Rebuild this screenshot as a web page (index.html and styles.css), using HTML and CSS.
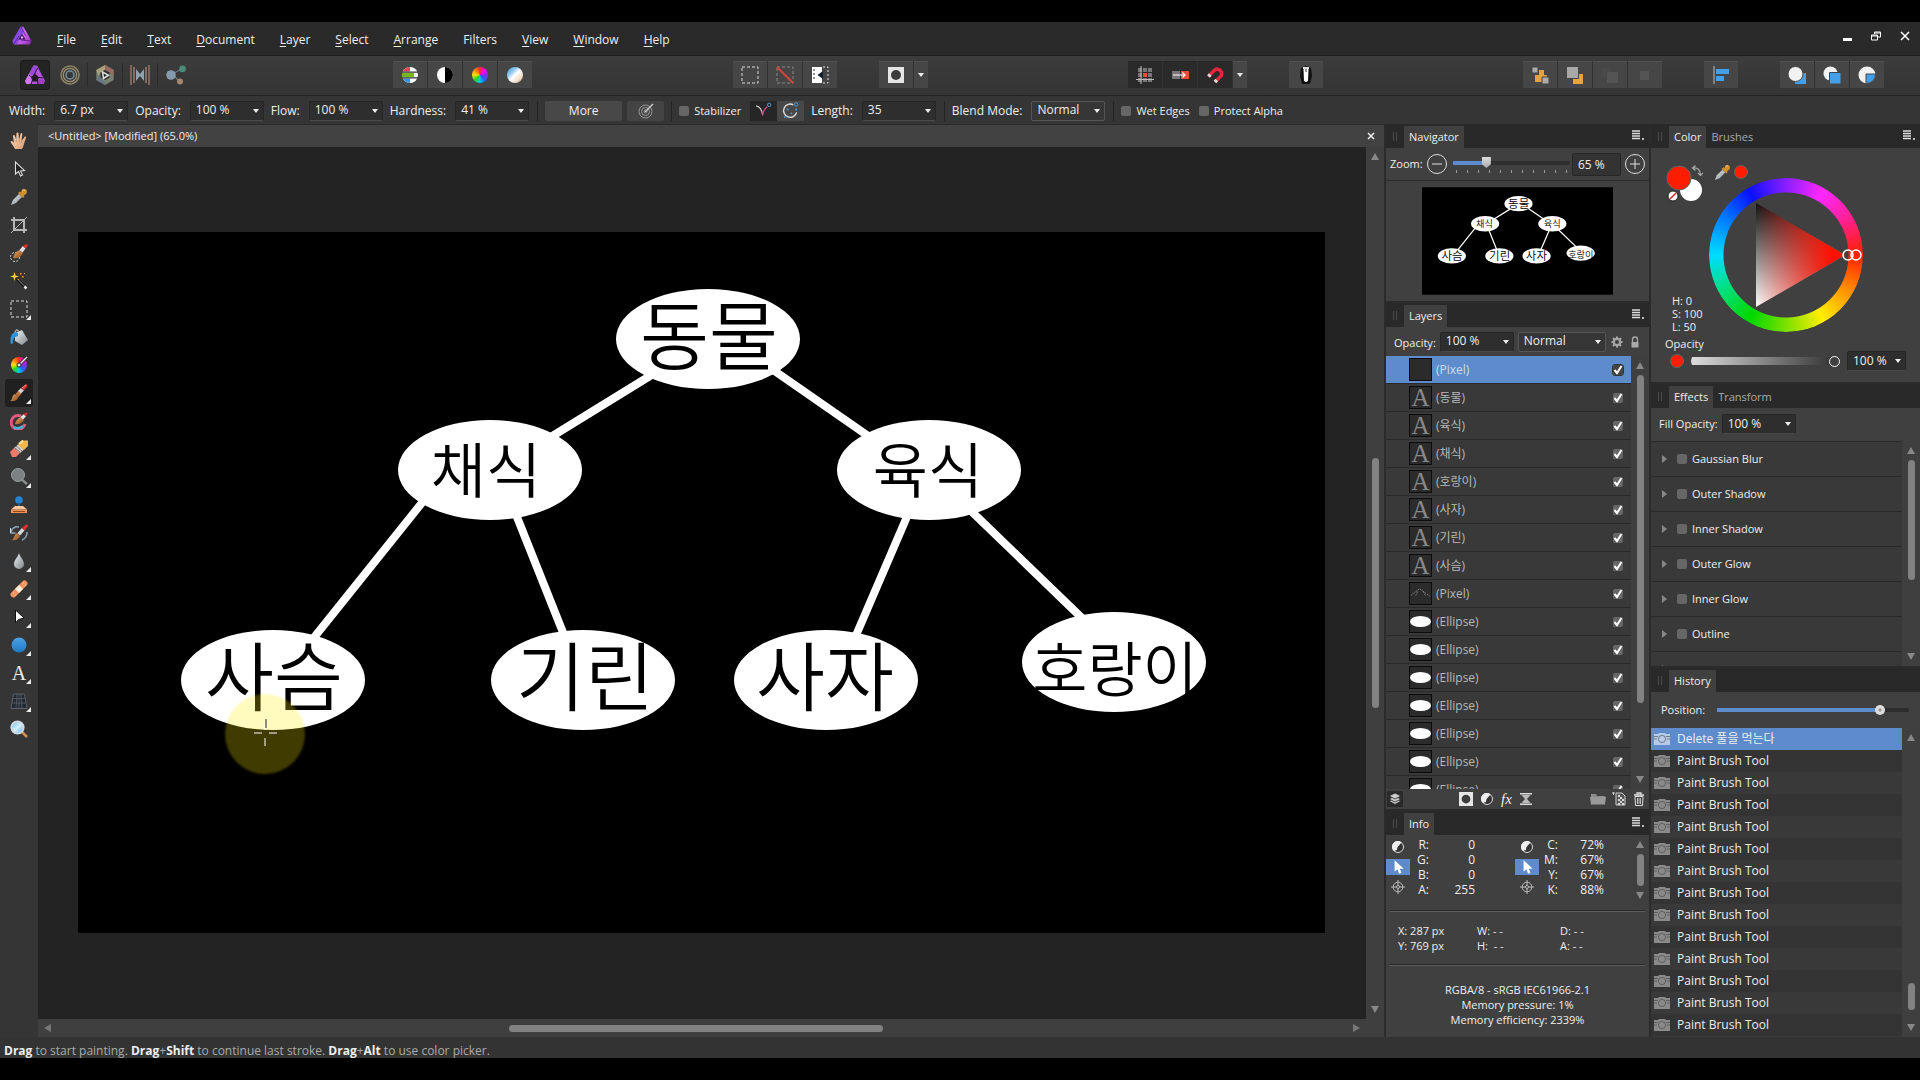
FILE: index.html
```html
<!DOCTYPE html>
<html lang="en">
<head>
  <meta charset="UTF-8">
  <meta name="viewport" content="width=device-width, initial-scale=1">
  <title>Photo Editor</title>
  <link rel="stylesheet" href="styles.css">
</head>
<body>

  <!-- Icon sprite -->
  <svg class="sprite" aria-hidden="true">
    <defs>
      <linearGradient id="g-purple" x1="0" y1="0" x2="1" y2="1"><stop offset="0" stop-color="#7a3ff0"/><stop offset=".5" stop-color="#d56cf5"/><stop offset="1" stop-color="#8a2bb8"/></linearGradient>
      <linearGradient id="g-wood" x1="0" y1="0" x2="1" y2="1"><stop offset="0" stop-color="#e8a868"/><stop offset="1" stop-color="#8a4a1c"/></linearGradient>
      <linearGradient id="g-steel" x1="0" y1="0" x2="1" y2="1"><stop offset="0" stop-color="#eef2f4"/><stop offset="1" stop-color="#7d868c"/></linearGradient>
      <linearGradient id="g-blue" x1="0" y1="0" x2="0" y2="1"><stop offset="0" stop-color="#4aa3e8"/><stop offset="1" stop-color="#1f78c4"/></linearGradient>
      <linearGradient id="g-photo" x1="0" y1="0" x2="1" y2="1"><stop offset="0" stop-color="#3a9be0"/><stop offset=".3" stop-color="#8cc6ee"/><stop offset=".5" stop-color="#fff"/><stop offset=".75" stop-color="#f3ddca"/><stop offset="1" stop-color="#d9935c"/></linearGradient>
      <linearGradient id="g-lens" x1="0" y1="0" x2="1" y2="1"><stop offset="0" stop-color="#5db4ee"/><stop offset=".5" stop-color="#d6effc"/><stop offset="1" stop-color="#58a9e2"/></linearGradient>
      <linearGradient id="g-skin" x1="0" y1="0" x2="1" y2="1"><stop offset="0" stop-color="#ffe0c4"/><stop offset="1" stop-color="#d99866"/></linearGradient>
    </defs>

    <symbol id="logo" viewBox="0 0 20 20">
      <path d="M8.500 .8h3L19.500 15l-1.800 3.500H2L.5 15z" fill="url(#g-purple)"/>
      <path d="M8.500 .8l3.200 6L5 18.500H2L.5 15z" fill="#6b3bd8" opacity=".65"/>
      <path d="M10 8l3.500 5.500h-7z" fill="#2a0f3e"/>
      <path d="M9 1l5 9M19 15l-10-1M2 18l5-8" stroke="#4a1a78" stroke-width=".8"/>
      <circle cx="10" cy="11.500" r="1.200" fill="#e9a8ff"/>
    </symbol>
    <symbol id="persona" viewBox="0 0 20 20">
      <path d="M8.500 .5h3.500L20 16l-1.500 3H1.500L0 16z" fill="#b452dc"/>
      <path d="M8.500 .5L4.500 8l4 3 3.500-9z" fill="#9a4ad8"/><path d="M4 9L0 16l1.500 3h4l2-7z" fill="#cf78ee"/><path d="M19.500 15l-8-1 1 5h6z" fill="#a03cc8"/>
      <path d="M10 8.500l4 4-2 4H8l-2-4z" fill="#1d1d1d"/>
      <path d="M12.500 3L8.500 11M18 13l-8-1M4 10l5 4M6 19l2.500-6M13 19l-1-5" stroke="#2c1238" stroke-width="1"/>
    </symbol>
    <symbol id="liquify" viewBox="0 0 20 20">
      <g fill="none"><circle cx="10" cy="10" r="9" stroke="#8c8566" stroke-width="1.500"/><circle cx="10" cy="10" r="6.700" stroke="#a09572" stroke-width="1.200"/><circle cx="10" cy="10" r="4" stroke="#7390a0" stroke-width="1.500"/></g>
    </symbol>
    <symbol id="develop" viewBox="0 0 20 20">
      <path d="M10 0l8.700 5v10L10 20l-8.700-5V5z" fill="#77816f"/>
      <path d="M10 0l8.700 5v5L10 5z" fill="#9a6a60"/><path d="M1.300 5L10 0v5L5 8v7z" fill="#a8a078"/><path d="M1.300 15L5 8v5l5 4v3z" fill="#66788a"/>
      <path d="M10 5l4.500 2.500v5L10 15l-4.500-2.500v-5z" fill="#2c2c2c"/>
      <path d="M7.500 7l6 3.200-5 3.300z" fill="none" stroke="#e0e0e0" stroke-width="1.500"/>
    </symbol>
    <symbol id="tone" viewBox="0 0 20 20">
      <path d="M1 0v20M19 0v20" stroke="#927466" stroke-width="1.500"/><path d="M4 2v16M16 2v16" stroke="#b09080" stroke-width="1.200"/>
      <path d="M6 4l4 5 4-5v12l-4-5-4 5z" fill="#8fa0b0"/>
    </symbol>
    <symbol id="export" viewBox="0 0 20 20">
      <path d="M6 9l10-5M6 9l8 8" stroke="#6c7a80" stroke-width="1.200"/>
      <circle cx="5" cy="10" r="4.800" fill="#8799ac"/><circle cx="16.500" cy="3.800" r="3.400" fill="#4c8a7a"/><circle cx="14" cy="16.500" r="3" fill="#a38770"/>
    </symbol>
    <symbol id="levels" viewBox="0 0 16 16">
      <circle cx="8" cy="8" r="8" fill="#fff"/><path d="M8 0a8 8 0 0 0-7 4.500h7z" fill="#e8425a"/><path d="M0 6h12v4H0z" fill="#74b81e"/><path d="M1 11.500A8 8 0 0 0 8 16v-4.500z" fill="#3e95e2"/><path d="M0 5.200h16M0 10.800h16" stroke="#333" stroke-width="1.200"/>
    </symbol>
    <symbol id="contrast" viewBox="0 0 16 16"><circle cx="8" cy="8" r="8" fill="#fff"/><path d="M8 0a8 8 0 0 1 0 16z" fill="#000"/></symbol>
    <symbol id="photo" viewBox="0 0 16 16"><circle cx="8" cy="8" r="8" fill="url(#g-photo)"/></symbol>
    <symbol id="marquee" viewBox="0 0 18 18"><path d="M1 1h16v16H1z" fill="none" stroke="#ddd" stroke-dasharray="3 2"/></symbol>
    <symbol id="deselect" viewBox="0 0 18 18"><path d="M1 1h16v16H1z" fill="none" stroke="#888" stroke-dasharray="3 2"/><path d="M1 1l16 16" stroke="#d8413a" stroke-width="2"/></symbol>
    <symbol id="invert" viewBox="0 0 18 18"><path d="M1 1h10v16H1z" fill="#fff"/><path d="M3 3v12" stroke="#222" stroke-dasharray="2 2"/><path d="M12 5v8L6.500 9z" fill="#14202e"/><path d="M12 1h5v16h-5" fill="none" stroke="#ddd" stroke-dasharray="2 2"/></symbol>
    <symbol id="mask" viewBox="0 0 16 16"><path d="M0 0h16v16H0z" fill="#e6e6e6"/><circle cx="8" cy="8" r="5" fill="#3c3c3c"/></symbol>
    <symbol id="grid" viewBox="0 0 18 18"><path d="M2 2h4v4H2zM7 2h4v4H7zM12 2h4v4h-4zM2 7h4v4H2zM12 7h4v4h-4zM2 12h4v4H2zM7 12h4v4H7zM12 12h4v4h-4z" fill="#777"/><path d="M7 7h4v4H7z" fill="#ee4b3b"/><path d="M5 0v18M0 13.500h18" stroke="#bbb"/></symbol>
    <symbol id="snapmove" viewBox="0 0 18 18"><path d="M1 5h8v8H1z" fill="#777"/><path d="M10 5h8v8h-8z" fill="#ee4b3b"/><path d="M2 9h12M11.500 6.500L14 9l-2.500 2.500" fill="none" stroke="#fff" stroke-width="1.200"/></symbol>
    <symbol id="magnet" viewBox="0 0 18 18"><g fill="none" stroke-width="3.500"><path d="M2.500 10.500L8 4.500a4.500 4.500 0 0 1 7 5.500L9 16" stroke="#e8233c"/><path d="M2.500 10.500l1.800-2M9 16l1.800-2" stroke="#ddd"/></g></symbol>
    <symbol id="assistant" viewBox="0 0 18 18"><path d="M4 2l5-2 5 2 1 8-2 8H5l-2-8z" fill="#111"/><path d="M6.500 3h5l-.5 12-2 1-2-1z" fill="#fff"/><path d="M6 1h6v2H6z" fill="#ddd"/><path d="M9 3v3" stroke="#333"/></symbol>
    <symbol id="back" viewBox="0 0 18 18"><path d="M8 4h5v5h3v4h-4v3H4V9h4z" fill="#e5a243"/><path d="M1 1h6v6H1zM11 11h7v7h-7z" fill="#aaa" stroke="#444"/></symbol>
    <symbol id="backone" viewBox="0 0 18 18"><path d="M7 8h10v10H7z" fill="#e5a243"/><path d="M.5 .5h12v12H.5z" fill="#a8a8a8" stroke="#444"/></symbol>
    <symbol id="fwdone" viewBox="0 0 18 18"><path d="M1 2h9v9H1z" fill="#494949"/><path d="M6 6h11v11H6z" fill="#545454"/></symbol>
    <symbol id="front" viewBox="0 0 18 18"><path d="M4 5h9v9H4z" fill="#545454"/></symbol>
    <symbol id="align" viewBox="0 0 18 18"><path d="M2 0v18" stroke="#bbb"/><path d="M4 3h13v5H4zM4 10h8v5H4z" fill="#459fe6"/></symbol>
    <symbol id="bool1" viewBox="0 0 18 18"><path d="M7 7h11v11H7z" fill="#459fe6"/><circle cx="7.500" cy="8" r="7.500" fill="#f2f2f2" stroke="#444"/></symbol>
    <symbol id="bool2" viewBox="0 0 18 18"><circle cx="7.500" cy="7.500" r="7" fill="#f2f2f2"/><path d="M6.500 6.500H18V18H6.500z" fill="#459fe6" stroke="#444"/></symbol>
    <symbol id="bool3" viewBox="0 0 18 18"><circle cx="9" cy="9" r="8.500" fill="#f2f2f2"/><path d="M8 8h9.500a9 9 0 0 1-9 9.500H8z" fill="#459fe6" stroke="#444"/></symbol>
    <symbol id="target" viewBox="0 0 16 16"><g fill="none" stroke="#999"><circle cx="7.500" cy="8.500" r="6.500"/><circle cx="7.500" cy="8.500" r="4"/><circle cx="7.500" cy="8.500" r="1.500"/></g><path d="M7 9l8-8" stroke="#ccc" stroke-width="1.500"/></symbol>
    <symbol id="rope" viewBox="0 0 18 18"><path d="M1 4q6 1 7 10" fill="none" stroke="#ddd" stroke-width="1.200"/><path d="M8 14q1-6 5-9" fill="none" stroke="#d04a8a" stroke-width="1.500"/><circle cx="15" cy="3" r="1.800" fill="none" stroke="#4aa3e8"/></symbol>
    <symbol id="window" viewBox="0 0 18 18"><path d="M12 3a7 7 0 1 0 3.500 8" fill="none" stroke="#ddd" stroke-width="1.500"/><circle cx="15" cy="2.500" r="1.800" fill="none" stroke="#4aa3e8"/><g fill="#4aa3e8"><circle cx="6" cy="8" r="1"/><circle cx="10" cy="12" r="1"/><circle cx="3" cy="16" r="1"/><circle cx="15" cy="8" r="1"/></g></symbol>

    <symbol id="hand" viewBox="0 0 18 18"><path d="M5 17C4 14 1 12 .5 9.500c1-1 2.500 0 3.500 1.500L3 4c0-1.500 1.500-1.500 2 0l1.200 4L6.500 1.500c.2-1.500 1.800-1.500 2 0L9 8l1.500-6c.5-1.500 2-1 1.800.5L11.500 9l3-4c1-1 2-.2 1.500 1C14.500 9 14 14 12 17z" fill="url(#g-skin)"/><path d="M6.200 8v2M9 8v2M11.500 9l-.5 2" stroke="#b9773f" stroke-width=".6"/></symbol>
    <symbol id="move" viewBox="0 0 18 18"><path d="M5.500 2v12l3-2.500 2 4.500 2-1-2-4 4-.5z" fill="#222" stroke="#ddd" stroke-width="1.100"/></symbol>
    <symbol id="picker" viewBox="0 0 18 18"><path d="M1 17l2-5 6-6 3 3-6 6z" fill="url(#g-steel)"/><path d="M8 5l5 5 1.500-1.500-1-1C17 6 17.500 4 16.500 2 15 .5 12 .5 11 4.500l-1-1z" fill="#d0902e"/><path d="M12 2.500q2-1.500 3 0" stroke="#f5d090" fill="none"/></symbol>
    <symbol id="crop" viewBox="0 0 18 18"><path d="M4 1v13h13M1 4h13v13" fill="none" stroke="#b5b5b5" stroke-width="2"/><path d="M1 17L17 1" stroke="#b5b5b5"/></symbol>
    <symbol id="brush" viewBox="0 0 18 18"><path d="M0 17c3-1 1-5 5-7l3.500 3C7 17 3 17.500 0 17z" fill="url(#g-wood)"/><path d="M5.500 10l3-3.500 3 3-3 3.500z" fill="#c0763a"/><path d="M8 7l3-3 3 2.500-3 3z" fill="#ccd2d6"/><path d="M11 4L15.500 .3Q18.500 0 17 3l-3.200 3.600z" fill="#d92f2f"/><path d="M12 4l4-3" stroke="#ff8c80"/></symbol>
    <symbol id="selbrush" viewBox="0 0 18 18"><circle cx="5" cy="13" r="4.500" fill="none" stroke="#ddd" stroke-dasharray="2 1.500"/><path d="M3 14c1-5 4-7 7-8l3 3c-2 4-5 6-10 5z" fill="url(#g-wood)"/><path d="M9.500 6L13 2l2.500 2.500-3 4z" fill="#dfe3e6"/><path d="M13 2q2-2.500 5-1.500-.5 3-2.500 4z" fill="#d92f2f"/></symbol>
    <symbol id="wand" viewBox="0 0 18 18"><path d="M6 6l10 10" stroke="#1c1c1c" stroke-width="3"/><path d="M7 6.500l9 9" stroke="#888"/><path d="M14.500 14.500l2 2" stroke="#eee" stroke-width="2.500"/><path d="M4.500 0l1 3.500L9 4.500l-3.500 1-1 3.500-1-3.500L0 4.500l3.500-1z" fill="#ffd24a"/><path d="M10 1h1.500v1.500H10zM12 4h1.500v1.500H12zM8 7h1v1H8zM14 1h1v1h-1z" fill="#f0a838"/></symbol>
    <symbol id="bucket" viewBox="0 0 18 18"><path d="M5 5l7-3 6 10-6 5-7-4z" fill="url(#g-steel)"/><path d="M4.500 6Q6-1 9 4" fill="none" stroke="#bbb" stroke-width="1.200"/><path d="M8 5C2 3 0 8 .5 15q1.500 2 2.500 0C3 10 5 9 8 8z" fill="#2e93d8"/></symbol>
    <symbol id="crookbrush" viewBox="0 0 18 18"><path d="M11 4a7 7 0 1 0 4 8" fill="none" stroke="#e05a80" stroke-width="3"/><path d="M4 15q4 3 9-1" stroke="#45b4dc" stroke-width="2.500" fill="none"/><path d="M5 12c1-4 3-6 6-7l3 3c-2 3-5 5-9 4z" fill="url(#g-wood)"/><path d="M10.500 5L14 2l2 2.500-3 3z" fill="#dfe3e6"/><path d="M13.500 2q2-2 4-1.500-.2 3-2 4z" fill="#d92f2f"/></symbol>
    <symbol id="eraser" viewBox="0 0 18 18"><path d="M0 12l4-4 6 5-4 4H2z" fill="#ef7a6c"/><path d="M4 8l4-3.500 6 5L10 13z" fill="#d9d4cc"/><path d="M6 6l6 5M5 8l5 4" stroke="#777"/><path d="M8 4.500L12 .5h6V6l-4 4z" fill="#f7b64a"/><path d="M9 4l4-3.500" stroke="#ffe2a0" stroke-width="2"/></symbol>
    <symbol id="dodge" viewBox="0 0 18 18"><path d="M11 11l6 5" stroke="#8a8a8a" stroke-width="2.500"/><circle cx="8" cy="7" r="6.500" fill="#7c8184" stroke="#9a9fa2"/></symbol>
    <symbol id="stamp" viewBox="0 0 18 18"><circle cx="9" cy="4" r="3.800" fill="#2583cf"/><path d="M8 7h2v4H8z" fill="#1b5d98"/><path d="M5 10h8l4 3.500H1z" fill="#ffc79a"/><path d="M1 13.500h16V17H1z" fill="#ee9257"/><path d="M3 15.500h12" stroke="#8f4b1e"/></symbol>
    <symbol id="undobrush" viewBox="0 0 18 18"><path d="M1 8Q3 2 9 3M17 8q0 6-5 8" fill="none" stroke="#8aa7bd" stroke-width="1.500"/><path d="M.5 4v5h5" fill="none" stroke="#cfe0ec"/><path d="M2 16c2-1 2-5 5-7l3 3c-1 3-4 5-8 4z" fill="url(#g-wood)"/><path d="M7.500 9L12 4l2.500 2.500-4.500 5z" fill="#d5dade"/><path d="M12 4L16 .5q3-.5 1.500 2.500l-3 3.500z" fill="#e03030"/></symbol>
    <symbol id="drop" viewBox="0 0 18 18"><path d="M9 1c1 4 5 7 5 11a5 5 0 0 1-10 0C4 8 8 5 9 1z" fill="url(#g-steel)"/></symbol>
    <symbol id="patch" viewBox="0 0 18 18"><path d="M3.500 14.500l11-11" stroke="#f4955e" stroke-width="6" stroke-linecap="round"/><path d="M7 11l4-4" stroke="#fff0e0" stroke-width="5.500"/><path d="M3 13h1M5 15h1M13 3h1M15 5h1" stroke="#ffd0a8"/></symbol>
    <symbol id="node" viewBox="0 0 18 18"><path d="M5.500 2v13l3-3.500L14 10z" fill="#fff" stroke="#111"/></symbol>
    <symbol id="shape" viewBox="0 0 18 18"><circle cx="9" cy="9" r="7.500" fill="url(#g-blue)"/></symbol>
    <symbol id="mesh" viewBox="0 0 18 18"><path d="M3.500 2h11L17 16.500H1z" fill="#222934" stroke="#5c6068"/><path d="M7 2L6 16.500M11 2l1 14.500M3 6.500h12M2 11h14M9 2v14.500" stroke="#5c6068" stroke-width=".8"/></symbol>
    <symbol id="zoomtool" viewBox="0 0 18 18"><path d="M12 12l5 5" stroke="#d98d48" stroke-width="2.500"/><circle cx="7.500" cy="7.500" r="6.200" fill="url(#g-lens)" stroke="#d5dade" stroke-width="1.800"/></symbol>

    <symbol id="menu" viewBox="0 0 12 10"><path d="M0 1h8M0 3.500h8M0 6h8M0 8.500h8" stroke="#ddd" stroke-width="1.500"/><path d="M10 8h2v2h-2z" fill="#bbb"/></symbol>
    <symbol id="gear" viewBox="0 0 12 12"><circle cx="6" cy="6" r="3.200" fill="none" stroke="#a5a5a5" stroke-width="2.200"/><path d="M6 .5v2M6 9.500v2M.5 6h2M9.500 6h2M2 2l1.500 1.500M8.500 8.500L10 10M10 2L8.500 3.500M3.500 8.500L2 10" stroke="#a5a5a5" stroke-width="2"/></symbol>
    <symbol id="lock" viewBox="0 0 12 12"><path d="M2.500 6h7v5.500h-7z" fill="#aaa"/><path d="M3.500 6V3.500a2.500 2.500 0 0 1 5 0V6" fill="none" stroke="#aaa" stroke-width="1.300"/></symbol>
    <symbol id="stack" viewBox="0 0 14 14"><g fill="#ccc" stroke="#222" stroke-width=".8"><path d="M7 6l6 3-6 3.500L1 9z"/><path d="M7 4l6 3-6 3-6-3z"/><path d="M7 1l6 3-6 3-6-3z"/></g></symbol>
    <symbol id="adjust" viewBox="0 0 14 14"><circle cx="7" cy="7" r="5.500" fill="#333" stroke="#ddd"/><path d="M3 11A5.500 5.500 0 0 1 10.500 2.500z" fill="#eee"/><path d="M3 11A5.500 5.500 0 0 1 7 1.500L6 10z" fill="#eee"/></symbol>
    <symbol id="hourglass" viewBox="0 0 14 14"><path d="M1 1h12v1.500H1zM1 11.500h12V13H1z" fill="#ddd"/><path d="M2.500 3h9L8 7l3.500 4h-9L6 7z" fill="#bbb"/></symbol>
    <symbol id="folder" viewBox="0 0 16 14"><path d="M1 2h5l1 2h8v8H1z" fill="#8d8d8d"/><path d="M0 5h16l-1 7.500H1z" fill="#999"/></symbol>
    <symbol id="newpixel" viewBox="0 0 14 14"><path d="M4 1h6l3 3v9H4z" fill="#555" stroke="#ccc"/><path d="M6 3h2v2H6zM8 5h2v2H8zM6 7h2v2H6zM10 7h2v2h-2zM8 9h2v2H8zM6 11h2v2H6zM10 11h2v2h-2z" fill="#ddd"/><path d="M0 1h3M1.500 0v3" stroke="#ccc"/></symbol>
    <symbol id="trash" viewBox="0 0 14 14"><path d="M2 3h10M5 2.500V1h4v1.500" fill="none" stroke="#ddd" stroke-width="1.300"/><path d="M3 4.500h8l-.5 9h-7z" fill="none" stroke="#ddd"/><path d="M5.500 6v6M7 6v6M8.500 6v6" stroke="#ddd" stroke-width=".8"/></symbol>
    <symbol id="pointer" viewBox="0 0 14 14"><path d="M4 1v10l2.500-2 1.500 4 2-1-1.500-3.500H12z" fill="#fff"/></symbol>
    <symbol id="cross" viewBox="0 0 14 14"><g fill="none" stroke="#bbb"><circle cx="7" cy="7" r="4.800"/><circle cx="7" cy="7" r="1.500"/><path d="M7 0v5.500M7 8.500V14M0 7h5.500M8.500 7H14"/></g></symbol>
    <symbol id="camera" viewBox="0 0 16 14"><path d="M0 2h4l1-1h6l1 1h4v11H0z" fill="currentColor" opacity=".85"/><path d="M0 4.500h4M0 7h3M12 4.500h4M13 7h3" stroke="#444" opacity=".6"/><circle cx="8" cy="7" r="3.600" fill="none" stroke="#444" opacity=".6"/></symbol>
    <symbol id="swap" viewBox="0 0 12 12"><path d="M2 3q7-1 7.500 7M4.500 .5L1.500 3l3 2.500M7 8l2.500 2.500L12 8" fill="none" stroke="#aaa" stroke-width="1.200"/></symbol>
    <symbol id="lines" viewBox="0 0 22 22"><path d="M1 13l9-7 11 8M8 9l-2 4M14 9l2 4" fill="none" stroke="#888" stroke-width=".9" stroke-dasharray="2 1"/></symbol>
  </svg>

  <header class="menubar">
    <svg class="app-logo"><use href="#logo"/></svg>
    <nav class="menus">
      <a href="#"><u>F</u>ile</a>
      <a href="#"><u>E</u>dit</a>
      <a href="#"><u>T</u>ext</a>
      <a href="#"><u>D</u>ocument</a>
      <a href="#"><u>L</u>ayer</a>
      <a href="#"><u>S</u>elect</a>
      <a href="#"><u>A</u>rrange</a>
      <a href="#">Filters</a>
      <a href="#"><u>V</u>iew</a>
      <a href="#"><u>W</u>indow</a>
      <a href="#"><u>H</u>elp</a>
    </nav>
    <div class="window-buttons">
      <button aria-label="Minimize"><svg viewBox="0 0 10 10"><path d="M1 7h9v3H1z" fill="#fff"/></svg></button>
      <button aria-label="Restore"><svg viewBox="0 0 10 10"><path d="M3.500 3V1h6v5H7M.5 4h6v5h-6zM.5 5h6M3.500 2h6" fill="none" stroke="#fff"/></svg></button>
      <button aria-label="Close"><svg viewBox="0 0 10 10"><path d="M1 1l8 8M9 1L1 9" stroke="#fff" stroke-width="1.500"/></svg></button>
    </div>
  </header>

  <div class="toolbar">
    <div class="personas">
      <button class="active" aria-label="Photo"><svg><use href="#persona"/></svg></button>
      <button aria-label="Liquify"><svg><use href="#liquify"/></svg></button>
      <button aria-label="Develop"><svg><use href="#develop"/></svg></button>
      <button aria-label="Tone Mapping"><svg><use href="#tone"/></svg></button>
      <button aria-label="Export"><svg><use href="#export"/></svg></button>
    </div>
    <span class="spacer"></span>
    <div class="group small">
      <button aria-label="Auto Levels"><svg><use href="#levels"/></svg></button>
      <button aria-label="Auto Contrast"><svg><use href="#contrast"/></svg></button>
      <button aria-label="Auto Colors"><span class="hue-dot"></span></button>
      <button aria-label="Auto White Balance"><svg><use href="#photo"/></svg></button>
    </div>
    <span class="spacer"></span>
    <div class="group">
      <button aria-label="Select All"><svg><use href="#marquee"/></svg></button>
      <button aria-label="Deselect"><svg><use href="#deselect"/></svg></button>
      <button aria-label="Invert Selection"><svg><use href="#invert"/></svg></button>
    </div>
    <div class="group small near">
      <button aria-label="Quick Mask"><svg><use href="#mask"/></svg></button>
      <button class="drop" aria-label="Mask options"><i class="caret"></i></button>
    </div>
    <span class="spacer"></span>
    <div class="group on">
      <button aria-label="Grid"><svg><use href="#grid"/></svg></button>
      <button aria-label="Force Pixel Alignment"><svg><use href="#snapmove"/></svg></button>
      <button aria-label="Snapping"><svg><use href="#magnet"/></svg></button>
      <button class="drop" aria-label="Snapping options"><i class="caret"></i></button>
    </div>
    <div class="group near">
      <button aria-label="Assistant"><svg><use href="#assistant"/></svg></button>
    </div>
    <span class="spacer"></span>
    <div class="group">
      <button aria-label="Move to Back"><svg><use href="#back"/></svg></button>
      <button aria-label="Back One"><svg><use href="#backone"/></svg></button>
      <button aria-label="Forward One"><svg><use href="#fwdone"/></svg></button>
      <button aria-label="Move to Front"><svg><use href="#front"/></svg></button>
    </div>
    <div class="group near">
      <button aria-label="Alignment"><svg><use href="#align"/></svg></button>
    </div>
    <div class="group near">
      <button aria-label="Insert Behind"><svg><use href="#bool1"/></svg></button>
      <button aria-label="Insert Top"><svg><use href="#bool2"/></svg></button>
      <button aria-label="Insert Inside"><svg><use href="#bool3"/></svg></button>
    </div>
  </div>

  <div class="context">
    <label for="width">Width:</label>
    <select id="width" class="field"><option>6.7 px</option></select>
    <label for="opacity">Opacity:</label>
    <select id="opacity" class="field"><option>100 %</option></select>
    <label for="flow">Flow:</label>
    <select id="flow" class="field"><option>100 %</option></select>
    <label for="hardness">Hardness:</label>
    <select id="hardness" class="field"><option>41 %</option></select>
    <span class="divider"></span>
    <button class="more">More</button>
    <button class="force" aria-label="Force Pressure"><svg><use href="#target"/></svg></button>
    <span class="divider"></span>
    <label class="check"><input type="checkbox">Stabilizer</label>
    <div class="modes">
      <button class="active" aria-label="Rope Mode"><svg><use href="#rope"/></svg></button>
      <button aria-label="Window Mode"><svg><use href="#window"/></svg></button>
    </div>
    <label for="length">Length:</label>
    <select id="length" class="field"><option>35</option></select>
    <span class="divider"></span>
    <label for="blend">Blend Mode:</label>
    <select id="blend" class="field raised"><option>Normal</option></select>
    <span class="divider"></span>
    <label class="check"><input type="checkbox">Wet Edges</label>
    <label class="check"><input type="checkbox">Protect Alpha</label>
  </div>

  <main class="workspace">
    <div class="tools" id="tools"></div>

    <section class="document">
      <div class="doc-tab">
        <span>&lt;Untitled&gt; [Modified] (65.0%)</span>
        <button aria-label="Close document"><svg viewBox="0 0 10 10"><path d="M2 2l6 6M8 2L2 8" stroke="#eee" stroke-width="1.500"/></svg></button>
      </div>
      <div class="doc-body">
        <div class="canvas">
          <svg class="artboard" viewBox="0 0 1247 701">
            <!-- also drawn in the navigator -->
            <g id="tree">
              <path d="M0 0h1247v701H0z" fill="#000"/>
              <g stroke="#fff" stroke-width="8">
                <path d="M580 139L468 208M688 133l108 75M347 267L234 408M437 280l51 128M831 280l-55 128M889 275l118 114"/>
              </g>
              <g fill="#fff">
                <ellipse cx="630" cy="107" rx="92" ry="50"/>
                <ellipse cx="412" cy="238" rx="92" ry="50"/>
                <ellipse cx="851" cy="238" rx="92" ry="50"/>
                <ellipse cx="195" cy="448" rx="92" ry="50"/>
                <ellipse cx="505" cy="448" rx="92" ry="50"/>
                <ellipse cx="748" cy="448" rx="92" ry="50"/>
                <ellipse cx="1036" cy="430" rx="92" ry="50"/>
              </g>
              <g class="tree-text">
                <text x="631" y="132" font-size="75">동물</text>
                <text x="408" y="261" font-size="60">채식</text>
                <text x="850" y="261" font-size="60">육식</text>
                <text x="196" y="473" font-size="75">사슴</text>
                <text x="507" y="473" font-size="75">기린</text>
                <text x="747" y="473" font-size="75">사자</text>
                <text x="1037" y="460" font-size="60">호랑이</text>
              </g>
            </g>
            <!-- cursor -->
            <circle class="halo" cx="187" cy="502" r="40"/>
            <path d="M187 490v8M187 506v8M176 501h8M191 501h8" stroke="#fff" stroke-width="1"/>
            <path d="M188 487v9" stroke="#222" stroke-width="1"/>
          </svg>
        </div>
        <div class="scroll doc-v"><i class="up"></i><div class="track"><b></b></div><i class="down"></i></div>
      </div>
      <div class="scroll horizontal"><i class="back"></i><div class="track"><b></b></div><i class="forward"></i></div>
    </section>

    <aside class="column middle">
      <section class="panel navigator">
        <div class="panel-head"><i class="grip"></i><button class="tab active">Navigator</button><button class="panel-menu" aria-label="Panel menu"><svg><use href="#menu"/></svg></button></div>
        <div class="zoom-row">
          <label for="zoom">Zoom:</label>
          <button class="round" aria-label="Zoom out"><svg viewBox="0 0 20 20"><circle cx="10" cy="10" r="9.500"/><path d="M5 10h10"/></svg></button>
          <div class="zoom-slider">
            <input type="range" id="zoom" min="0" max="100" value="27">
            <div class="ticks"><i></i><i></i><i></i><i></i><i></i><i></i><i></i><i></i><i></i><i></i><i></i></div>
          </div>
          <input type="text" class="zoom-value" value="65 %" aria-label="Zoom level">
          <button class="round" aria-label="Zoom in"><svg viewBox="0 0 20 20"><circle cx="10" cy="10" r="9.500"/><path d="M5 10h10M10 5v10"/></svg></button>
        </div>
        <div class="preview"><svg viewBox="0 0 1247 701"><use href="#tree"/></svg></div>
      </section>

      <section class="panel layers">
        <div class="panel-head"><i class="grip"></i><button class="tab active">Layers</button><button class="panel-menu" aria-label="Panel menu"><svg><use href="#menu"/></svg></button></div>
        <div class="layer-opts">
          <label for="layer-opacity">Opacity:</label>
          <select id="layer-opacity" class="field"><option>100 %</option></select>
          <select class="field raised" aria-label="Layer blend mode"><option>Normal</option></select>
          <button aria-label="Blend options"><svg><use href="#gear"/></svg></button>
          <button aria-label="Lock"><svg><use href="#lock"/></svg></button>
        </div>
        <div class="list-wrap">
          <ul class="layer-list" id="layers"></ul>
          <div class="scroll layers-v"><i class="up"></i><div class="track"><b></b></div><i class="down"></i></div>
        </div>
        <div class="layer-actions">
          <button class="active" aria-label="Edit all layers"><svg><use href="#stack"/></svg></button>
          <span class="mid">
            <button aria-label="Mask layer"><svg><use href="#mask"/></svg></button>
            <button aria-label="Adjustments"><svg><use href="#adjust"/></svg></button>
            <button class="fx">fx</button>
            <button aria-label="Live filters"><svg><use href="#hourglass"/></svg></button>
          </span>
          <button aria-label="Group"><svg class="wide"><use href="#folder"/></svg></button>
          <button aria-label="Add pixel layer"><svg><use href="#newpixel"/></svg></button>
          <button aria-label="Delete"><svg><use href="#trash"/></svg></button>
        </div>
      </section>

      <section class="panel info">
        <div class="panel-head"><i class="grip"></i><button class="tab active">Info</button><button class="panel-menu" aria-label="Panel menu"><svg><use href="#menu"/></svg></button></div>
        <div class="readouts">
          <div class="sample"><svg><use href="#adjust"/></svg><svg class="active"><use href="#pointer"/></svg><svg><use href="#cross"/></svg></div>
          <table>
            <tr><th>R:</th><td>0</td></tr>
            <tr><th>G:</th><td>0</td></tr>
            <tr><th>B:</th><td>0</td></tr>
            <tr><th>A:</th><td>255</td></tr>
          </table>
          <div class="sample"><svg><use href="#adjust"/></svg><svg class="active"><use href="#pointer"/></svg><svg><use href="#cross"/></svg></div>
          <table>
            <tr><th>C:</th><td>72%</td></tr>
            <tr><th>M:</th><td>67%</td></tr>
            <tr><th>Y:</th><td>67%</td></tr>
            <tr><th>K:</th><td>88%</td></tr>
          </table>
          <div class="scroll info-v"><i class="up"></i><div class="track"><b></b></div><i class="down"></i></div>
        </div>
        <div class="coords">
          <p>X: 287 px<br>Y: 769 px</p>
          <p>W: - -<br>H: &nbsp;- -</p>
          <p>D: - -<br>A: - -</p>
        </div>
        <p class="memory">RGBA/8 - sRGB IEC61966-2.1<br>Memory pressure: 1%<br>Memory efficiency: 2339%</p>
      </section>
    </aside>

    <aside class="column side">
      <section class="panel color">
        <div class="panel-head"><i class="grip"></i><button class="tab active">Color</button><button class="tab">Brushes</button><button class="panel-menu" aria-label="Panel menu"><svg><use href="#menu"/></svg></button></div>
        <div class="color-body">
          <div class="swatches">
            <svg viewBox="0 0 86 40">
              <circle cx="26" cy="26" r="11" fill="#fff"/>
              <circle cx="14" cy="14" r="12" fill="#ff1d00" stroke="#666"/>
              <circle cx="8" cy="32" r="5" fill="#fff" stroke="#222"/><path d="M5 35l6-6" stroke="#e02020" stroke-width="1.500"/>
              <use href="#swap" x="26" y="1" width="12" height="12"/>
              <use href="#picker" x="49" y="0" width="17" height="17"/>
              <circle cx="76" cy="8" r="6.500" fill="#ff1d00" stroke="#666"/>
            </svg>
          </div>
          <div class="wheel">
            <div class="ring"></div>
            <div class="triangle"></div>
            <svg viewBox="0 0 154 154"><g fill="none" stroke="#fff" stroke-width="1.500"><circle cx="139" cy="77" r="5"/><circle cx="147" cy="77" r="5"/></g></svg>
          </div>
          <p class="hsl">H: 0<br>S: 100<br>L: 50</p>
        </div>
        <label class="opacity-title" for="color-opacity">Opacity</label>
        <div class="opacity-row">
          <span class="dot"></span>
          <input type="range" id="color-opacity" value="100">
          <select class="field split" aria-label="Color opacity"><option>100 %</option></select>
        </div>
      </section>

      <section class="panel effects">
        <div class="panel-head"><i class="grip"></i><button class="tab active">Effects</button><button class="tab">Transform</button></div>
        <div class="fill-row">
          <label for="fill">Fill Opacity:</label>
          <select id="fill" class="field"><option>100 %</option></select>
        </div>
        <div class="list-wrap">
          <ul class="effect-list" id="effects"></ul>
          <div class="scroll effects-v"><i class="up"></i><div class="track"><b></b></div><i class="down"></i></div>
        </div>
      </section>

      <section class="panel history">
        <div class="panel-head"><i class="grip"></i><button class="tab active">History</button></div>
        <div class="position-row">
          <label for="position">Position:</label>
          <input type="range" id="position" min="0" max="100" value="87">
        </div>
        <div class="list-wrap">
          <ul class="history-list" id="history"></ul>
          <div class="scroll history-v"><i class="up"></i><div class="track"><b></b></div><i class="down"></i></div>
        </div>
      </section>
    </aside>
  </main>

  <footer class="status"><b>Drag</b> to start painting. <b>Drag</b>+<b>Shift</b> to continue last stroke. <b>Drag</b>+<b>Alt</b> to use color picker.</footer>

  <script>
    // [icon, label, has flyout]
    const tools = [
      ["hand", "View"], ["move", "Move"], ["picker", "Color Picker"], ["crop", "Crop"],
      ["selbrush", "Selection Brush"], ["wand", "Flood Select"], ["marquee", "Marquee", true],
      ["bucket", "Flood Fill"], ["wheel", "Gradient"], ["brush", "Paint Brush", true],
      ["crookbrush", "Color Replacement"], ["eraser", "Erase", true], ["dodge", "Dodge", true],
      ["stamp", "Clone"], ["undobrush", "Undo Brush"], ["drop", "Blur", true],
      ["patch", "Healing", true], ["node", "Node", true], ["shape", "Ellipse", true],
      ["letter", "Text", true], ["mesh", "Mesh Warp", true], ["zoomtool", "Zoom"]
    ];
    // icons that are not in the sprite
    const special = {
      wheel: '<span class="hue-dot"></span><svg class="needle" viewBox="0 0 18 18"><path d="M9 9l8-8" stroke="#222" stroke-width="3"/><path d="M9 9l8-8" stroke="#eee" stroke-width="1.500"/><circle cx="9" cy="9" r="2" fill="#eee" stroke="#222"/></svg>',
      letter: '<span class="letter">A</span>'
    };
    document.getElementById("tools").innerHTML = tools.map(([icon, label, flyout]) => {
      const cls = (label === "Paint Brush" ? "active " : "") + (flyout ? "flyout" : "");
      const art = special[icon] || `<svg><use href="#${icon}"/></svg>`;
      return `<button class="${cls}" aria-label="${label}">${art}</button>`;
    }).join("");

    const texts = ["동물", "육식", "채식", "호랑이", "사자", "기린", "사슴"];
    const layers = [
      { name: "Pixel", thumb: "" },
      ...texts.map(name => ({ name, thumb: '<span class="letter">A</span>' })),
      { name: "Pixel", thumb: '<svg><use href="#lines"/></svg>' },
      ...Array(7).fill({ name: "Ellipse", thumb: '<i class="oval"></i>' })
    ];
    document.getElementById("layers").innerHTML = layers.map((layer, i) => `
      <li class="${i === 0 ? "selected" : ""}">
        <span class="thumb">${layer.thumb}</span>
        <label for="layer${i}">(${layer.name})</label>
        <input type="checkbox" id="layer${i}" checked>
      </li>`).join("");

    const effects = ["Gaussian Blur", "Outer Shadow", "Inner Shadow", "Outer Glow", "Inner Glow", "Outline"];
    document.getElementById("effects").innerHTML = effects.map(name =>
      `<li><label class="check"><input type="checkbox">${name}</label></li>`).join("") + "<li></li>";

    const history = ["Delete 풀을 먹는다", ...Array(13).fill("Paint Brush Tool")];
    document.getElementById("history").innerHTML = history.map((name, i) =>
      `<li class="${i === 0 ? "selected" : ""}"><svg><use href="#camera"/></svg>${name}</li>`).join("");
  </script>

</body>
</html>
```
FILE: styles.css
```css
* {
  box-sizing: border-box;
}
body {
  display: flex;
  flex-direction: column;
  height: 100vh;
  margin: 0;
  padding: 22px 0;
  background: #000;
  color: #eee;
  font: 12px/16px "Open Sans", "Noto Sans CJK KR", sans-serif;
  overflow: hidden;
}
button {
  display: flex;
  align-items: center;
  justify-content: center;
  padding: 0;
  border: 0;
  background: none;
  color: inherit;
  font: inherit;
}
p, ul {
  margin: 0;
  padding: 0;
  list-style: none;
}
.sprite {
  position: absolute;
  width: 0;
  height: 0;
}

/* Menu bar */
.menubar {
  display: flex;
  align-items: center;
  flex: none;
  height: 33px;
  padding: 0 10px 0 12px;
  background: #2a2a2a;
}
.app-logo {
  width: 20px;
  height: 20px;
  margin: 0 25px 6px 0;
}
.menus {
  display: flex;
  gap: 25px;
  padding-top: 2px;
}
.menus a {
  color: #eee;
  text-decoration: none;
}
.menus u {
  text-underline-offset: 2px;
}
.window-buttons {
  display: flex;
  gap: 19px;
  margin: 0 0 6px auto;
}
.window-buttons svg {
  width: 10px;
  height: 10px;
}

/* Toolbar */
.toolbar {
  display: flex;
  align-items: center;
  flex: none;
  height: 41px;
  padding: 0 36px 2px 20px;
  border-top: 1px solid #1f1f1f;
  border-bottom: 1px solid #222;
  background: linear-gradient(#3c3c3c, #343434);
}
.spacer {
  flex: 1;
}
.near {
  margin-left: 42px;
}
.personas {
  display: flex;
}
.personas button {
  width: 35px;
  height: 24px;
  border-right: 1px solid #2a2a2a;
}
.personas button:last-child {
  border: 0;
}
.personas .active {
  width: 30px;
  height: 30px;
  margin: -3px 3px -3px 0;
  border: 1px solid #1a1a1a;
  border-radius: 3px;
  background: #242424;
}
.personas svg {
  width: 20px;
  height: 20px;
}
.group {
  display: flex;
  gap: 1px;
  background: #333;
}
.group button {
  width: 34px;
  height: 27px;
  border-top: 1px solid #505050;
  background: #464646;
}
.group.on button {
  border-color: #262626;
  background: #2a2a2a;
}
.group svg {
  width: 18px;
  height: 18px;
}
.group.small svg {
  width: 16px;
  height: 16px;
}
.group .drop,
.group.on .drop {
  width: 14px;
  border-color: #505050;
  background: #464646;
}
.caret {
  border: 3px solid transparent;
  border-top: 4px solid #eee;
  border-bottom: 0;
}
.hue-dot {
  width: 16px;
  height: 16px;
  border-radius: 50%;
  background: conic-gradient(#ff2a2a, #f0f, #8a2be2, #2b5cff, #00c8e8, #2bd42b, #f5e400, #ff8a00, #ff2a2a);
}

/* Context bar */
.context {
  display: flex;
  align-items: center;
  flex: none;
  height: 28px;
  padding: 1px 8px 0 9px;
  background: #353535;
  white-space: nowrap;
}
.context > label:not(.check) {
  margin-right: 9px;
}
.field {
  width: 74px;
  height: 20px;
  margin: 0;
  padding: 0 14px 1px 5px;
  border: 1px solid #262626;
  border-bottom-color: #4a4a4a;
  border-radius: 2px;
  appearance: none;
  background: #2e2e2e url("data:image/svg+xml,%3Csvg xmlns='http://www.w3.org/2000/svg' width='6' height='4'%3E%3Cpath d='M0 0h6L3 4z' fill='%23eee'/%3E%3C/svg%3E") no-repeat right 4px center;
  color: #eee;
  font: inherit;
}
.field.raised {
  border-color: #555;
  background-color: #363636;
}
.context .field {
  margin-right: 7px;
}
.divider {
  width: 1px;
  height: 20px;
  margin: 0 7px 0 1px;
  background: #242424;
}
.more {
  width: 77px;
  height: 20px;
  margin-right: 5px;
  border-radius: 2px;
  background: #484848;
}
.force {
  width: 37px;
  height: 20px;
  margin-right: 6px;
  border-radius: 2px;
  background: #444;
}
.force svg {
  width: 16px;
  height: 16px;
}
.check {
  display: flex;
  align-items: center;
  gap: 5px;
  margin-right: 9px;
  font-size: 11px;
}
.check input {
  width: 10px;
  height: 10px;
  margin: 0;
  border-radius: 2px;
  appearance: none;
  background: #666;
}
.modes {
  display: flex;
  margin-right: 7px;
}
.modes button {
  width: 27px;
  height: 20px;
  background: #484848;
}
.modes .active {
  background: #262626;
}
.modes svg {
  width: 17px;
  height: 17px;
}

/* Workspace */
.workspace {
  display: flex;
  flex: 1;
  gap: 2px;
  min-height: 0;
  background: #2b2b2b;
}
.tools {
  width: 38px;
  margin-right: -2px;
  padding: 3px 5px;
  background: #353535;
}
.tools button {
  position: relative;
  width: 28px;
  height: 28px;
  border-radius: 3px;
}
.tools .active {
  background: #202020;
}
.tools svg {
  width: 18px;
  height: 18px;
}
.tools .needle {
  position: absolute;
}
.tools .flyout::after {
  content: "";
  position: absolute;
  right: 2px;
  bottom: 3px;
  border-left: 5px solid transparent;
  border-bottom: 5px solid #eee;
}
.letter {
  font: 20px/20px "Liberation Serif", serif;
}
.document {
  display: flex;
  flex: 1;
  flex-direction: column;
  min-width: 0;
  background: #3f3f3f;
}
.doc-tab {
  display: flex;
  align-items: center;
  justify-content: space-between;
  flex: none;
  height: 23px;
  padding: 0 8px 0 10px;
  border-top: 1px solid #2a2a2a;
  background: #424242;
  font-size: 11px;
}
.doc-tab svg {
  width: 10px;
  height: 10px;
}
.doc-body {
  display: flex;
  flex: 1;
  min-height: 0;
}
.canvas {
  display: flex;
  align-items: center;
  flex: 1;
  padding: 0 41px 2px 40px;
  background: #232323;
}
.artboard {
  width: 100%;
}
.tree-text {
  fill: #000;
  font-family: "Noto Sans CJK KR", sans-serif;
  font-weight: 350;
  text-anchor: middle;
}
.halo {
  fill: #ffec00;
  opacity: .25;
  filter: blur(1px);
}

/* Scroll bars */
.scroll {
  display: flex;
  flex: none;
  flex-direction: column;
  align-items: center;
  width: 18px;
  background: #3f3f3f;
}
.scroll .track {
  display: grid;
  flex: 1;
  width: 7px;
}
.scroll b {
  grid-row: 2;
  border-radius: 4px;
  background: #828282;
}
.scroll i {
  margin: 6px 0;
  border: 4px solid transparent;
}
.scroll .up {
  border-top: 0;
  border-bottom: 7px solid #888;
}
.scroll .down {
  border-bottom: 0;
  border-top: 7px solid #888;
}
.scroll.horizontal {
  flex-direction: row;
  width: auto;
  height: 18px;
  margin-right: 18px;
}
.horizontal i {
  margin: 0 6px;
}
.horizontal .back {
  border-left: 0;
  border-right: 7px solid #777;
}
.horizontal .forward {
  border-right: 0;
  border-left: 7px solid #777;
}
.horizontal .track {
  grid-template-columns: 35fr 29fr 36fr;
  height: 7px;
}
.horizontal b {
  grid-row: 1;
  grid-column: 2;
}
.doc-v .track { grid-template-rows: 35fr 30fr 35fr; }
.layers-v .track { grid-template-rows: 0fr 83fr 17fr; }
.info-v .track { grid-template-rows: 0fr 1fr 0fr; }
.effects-v .track { grid-template-rows: 0fr 64fr 36fr; }
.history-v .track { grid-template-rows: 87fr 10fr 3fr; }

/* Panels */
.column {
  display: flex;
  flex: none;
  flex-direction: column;
  gap: 2px;
}
.middle {
  width: 263px;
}
.side {
  width: 269px;
}
.panel {
  display: flex;
  flex: none;
  flex-direction: column;
  min-height: 0;
  background: #404040;
}
.panel-head {
  display: flex;
  align-items: flex-end;
  flex: none;
  height: 24px;
  padding: 0 5px 0 7px;
  background: #292929;
  font-size: 11px;
}
.grip {
  width: 4px;
  height: 9px;
  margin: 0 7px 7px 0;
  border: 1px solid #4a4a4a;
  border-width: 0 1px;
}
.tab {
  height: 22px;
  padding: 0 5px;
  color: #aaa;
}
.tab.active {
  background: #404040;
  color: #eee;
}
.panel-menu {
  margin: 0 0 8px auto;
}
.panel-menu svg {
  width: 12px;
  height: 10px;
}
.list-wrap {
  display: flex;
  flex: 1;
  min-height: 0;
}
.list-wrap ul {
  flex: 1;
  overflow: hidden;
  background: #393939;
}

/* Navigator */
.navigator {
  height: 177px;
}
.zoom-row {
  display: flex;
  align-items: center;
  height: 33px;
  padding: 0 4px;
  border-bottom: 1px solid #2b2b2b;
}
.zoom-row label {
  font-size: 11px;
}
.zoom-row .round {
  margin: 0 4px;
}
.zoom-row .round:last-child {
  margin-right: 0;
}
.round svg {
  width: 20px;
  height: 20px;
  fill: none;
  stroke: #ddd;
}
.zoom-slider {
  flex: 1;
  padding: 0 2px;
}
input[type="range"] {
  display: block;
  width: 100%;
  height: 14px;
  margin: 0;
  appearance: none;
  background: none;
}
.zoom-slider input {
  background: linear-gradient(90deg, #5d8bcb 28%, #2f2f2f 28%) no-repeat center / 100% 4px;
}
.zoom-slider input::-webkit-slider-thumb {
  width: 9px;
  height: 11px;
  appearance: none;
  background: linear-gradient(#ddd, #aaa);
  clip-path: polygon(0 0, 100% 0, 100% 65%, 50% 100%, 0 65%);
}
.ticks {
  display: flex;
  justify-content: space-between;
  padding: 0 3px;
}
.ticks i {
  width: 1px;
  height: 3px;
  background: #999;
}
.zoom-value {
  width: 49px;
  height: 23px;
  padding: 0 5px;
  border: 1px solid #262626;
  border-radius: 2px;
  background: #333;
  color: #eee;
  font: inherit;
}
.preview {
  display: flex;
  justify-content: center;
  padding-top: 6px;
}
.preview svg {
  width: 191px;
  height: 108px;
}

/* Layers */
.layers {
  flex: 1;
}
.layer-opts {
  display: flex;
  align-items: center;
  flex: none;
  gap: 4px;
  height: 29px;
  padding: 0 7px 0 8px;
}
.layer-opts label {
  padding-top: 2px;
  font-size: 11px;
}
.layer-opts .field {
  flex: 74;
  min-width: 0;
}
.layer-opts .raised {
  flex: 94;
}
.layer-opts svg {
  width: 12px;
  height: 12px;
}
.layer-opts button {
  width: 14px;
}
.layer-list li {
  display: flex;
  align-items: center;
  height: 28px;
  padding: 0 8px 0 23px;
  border-bottom: 1px solid #2a2a2a;
  color: #b8b8b8;
}
.layer-list .selected {
  background: #5d8bcb;
  color: #d0dcee;
}
.layer-list label {
  flex: 1;
  padding-top: 1px;
}
.thumb {
  display: flex;
  align-items: center;
  justify-content: center;
  width: 23px;
  height: 23px;
  margin-right: 4px;
  border: 1px solid #0c0c0c;
  background: #2b2b2b;
  color: #888;
}
.thumb .letter {
  font-size: 25px;
}
.thumb svg {
  width: 21px;
  height: 21px;
}
.oval {
  width: 21px;
  height: 11px;
  border-radius: 50%;
  background: #fff;
}
.layer-list input {
  width: 10px;
  height: 10px;
  margin: 0;
  border-radius: 2px;
  appearance: none;
  background: #666 url("data:image/svg+xml,%3Csvg xmlns='http://www.w3.org/2000/svg' viewBox='0 0 10 10'%3E%3Cpath d='M1.500 5L4 8l4.500-7' fill='none' stroke='%23fff' stroke-width='2'/%3E%3C/svg%3E");
}
.layer-list .selected input {
  outline: 1px solid #333;
  background-color: #444;
}
.layer-actions {
  display: flex;
  align-items: center;
  flex: none;
  gap: 6px;
  height: 20px;
  padding: 0 3px 0 1px;
}
.layer-actions svg {
  width: 14px;
  height: 14px;
}
.layer-actions .wide {
  width: 16px;
}
.layer-actions .active {
  width: 16px;
  height: 16px;
  background: #2a2a2a;
}
.mid {
  display: flex;
  flex: 1;
  gap: 7px;
  padding-left: 50px;
}
.fx {
  font: italic 15px/14px "Liberation Serif", serif;
}

/* Info */
.info {
  height: 226px;
}
.readouts {
  display: flex;
  height: 70px;
}
.sample {
  display: flex;
  flex-direction: column;
  align-items: center;
  gap: 4px;
  width: 24px;
  padding-top: 4px;
}
.sample svg {
  width: 14px;
  height: 16px;
}
.sample .active {
  width: 24px;
  background: #5d8bcb;
}
.readouts table {
  flex: 1;
  height: 60px;
  margin: 2px 40px 0 3px;
  border-spacing: 0;
  line-height: 15px;
}
.readouts th,
.readouts td {
  padding: 0;
  font-weight: normal;
  text-align: right;
}
.readouts th {
  width: 16px;
}
.readouts table + .sample + table {
  margin-right: 27px;
}
.coords {
  display: grid;
  grid-template-columns: 79px 83px 1fr;
  height: 55px;
  margin: 5px 4px 0;
  padding: 12px 8px;
  border: solid #2a2a2a;
  border-width: 1px 0;
  font-size: 11px;
  line-height: 15px;
  box-shadow: 0 1px #5c5c5c, inset 0 1px #5c5c5c;
}
.memory {
  padding-top: 17px;
  font-size: 11px;
  line-height: 15px;
  text-align: center;
}

/* Color */
.color {
  height: 258px;
}
.color-body {
  display: grid;
  grid-template-columns: 58px 154px 1fr;
  grid-template-rows: 30px 105px 50px;
}
.swatches {
  grid-area: 1 / 1 / 3 / 3;
  padding: 16px 0 0 14px;
}
.swatches svg {
  width: 86px;
  height: 40px;
}
.wheel {
  display: grid;
  grid-area: 2 / 2 / 4 / 3;
  height: 154px;
}
.wheel > * {
  grid-area: 1 / 1;
}
.wheel svg {
  z-index: 1;
}
.ring {
  border-radius: 50%;
  background: conic-gradient(from 90deg, #ff2000, #ff9000 30deg, #fe0 60deg, #7be000 90deg, #00d800 120deg, #00e090 155deg, #0df 180deg, #07f 212deg, #0a10ff 240deg, #8a1eff 270deg, #ff28ff 300deg, #ff2090 330deg, #ff2000);
  mask: radial-gradient(circle, transparent 62px, #000 63px);
}
.triangle {
  width: 89px;
  height: 104px;
  margin: 25px 0 0 47px;
  background: linear-gradient(to left, #f10 15%, rgba(255, 17, 0, 0)), linear-gradient(#111, #fff);
  clip-path: polygon(0 0, 100% 50%, 0 100%);
}
.hsl {
  grid-area: 3 / 1 / 4 / 2;
  align-self: end;
  padding-left: 21px;
  font-size: 11px;
  line-height: 13px;
}
.opacity-title {
  padding: 4px 14px 0;
  font-size: 11px;
  line-height: 14px;
}
.opacity-row {
  display: flex;
  align-items: center;
  gap: 7px;
  padding: 0 14px 0 19px;
}
.dot {
  flex: none;
  width: 14px;
  height: 14px;
  border: 1px solid #666;
  border-radius: 50%;
  background: #ff1d00;
}
.opacity-row input {
  flex: 1;
  min-width: 0;
  background: linear-gradient(90deg, #ddd, #2c2c2c) no-repeat center / 100% 8px;
  border-radius: 7px;
}
.opacity-row input::-webkit-slider-thumb {
  width: 11px;
  height: 11px;
  border: 1px solid #fff;
  border-radius: 50%;
  appearance: none;
  background: #404040;
}
.opacity-row .field {
  width: 59px;
}

/* Effects */
.effects {
  height: 282px;
}
.fill-row {
  display: flex;
  align-items: center;
  gap: 4px;
  height: 33px;
  padding: 0 8px 1px;
}
.fill-row label,
.position-row label {
  font-size: 11px;
}
.effect-list li {
  display: flex;
  align-items: center;
  gap: 10px;
  height: 35px;
  padding-left: 11px;
  border-top: 1px solid #2a2a2a;
}
.effect-list li::before {
  content: "";
  border: 4px solid transparent;
  border-left: 5px solid #888;
  border-right: 0;
}

/* History */
.history {
  flex: 1;
}
.position-row {
  display: flex;
  align-items: center;
  flex: none;
  gap: 12px;
  height: 36px;
  padding: 0 11px 0 10px;
}
.position-row input {
  flex: 1;
  min-width: 0;
  background: linear-gradient(90deg, #5d8bcb 87%, #2e2e2e 87%) no-repeat center / 100% 4px;
}
.position-row input::-webkit-slider-thumb {
  width: 10px;
  height: 10px;
  border-radius: 50%;
  appearance: none;
  background: radial-gradient(#999 15%, #ddd 30%);
}
.history-list li {
  display: flex;
  align-items: center;
  gap: 7px;
  height: 22px;
  padding-left: 3px;
  color: #eee;
}
.history-list li:nth-child(even) {
  background: #343434;
}
.history-list .selected {
  background: #5d8bcb;
}
.history-list svg {
  width: 16px;
  height: 14px;
  color: #999;
}
.history-list .selected svg {
  color: #c5d6ee;
}

/* Status bar */
.status {
  flex: none;
  height: 21px;
  padding: 6px 4px 0;
  background: #333;
  color: #aaa;
  line-height: 15px;
}
.status b {
  color: #eee;
}
```
